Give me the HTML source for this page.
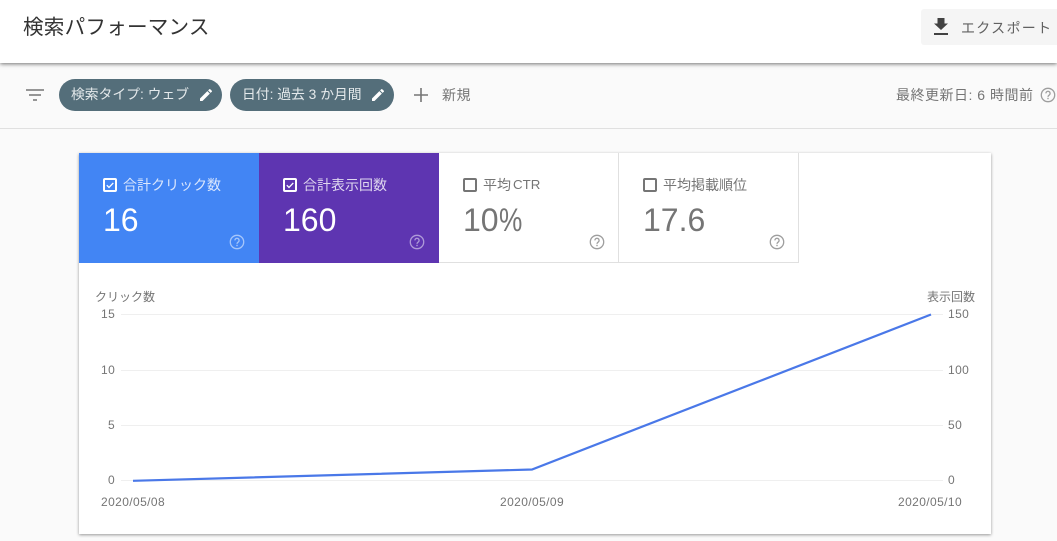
<!DOCTYPE html>
<html lang="ja">
<head>
<meta charset="utf-8">
<style>
html,body{margin:0;padding:0}
body{width:1057px;height:541px;overflow:hidden;position:relative;background:#fafafa;font-family:"Liberation Sans","Noto Sans CJK JP",sans-serif}
.a{position:absolute;white-space:nowrap}
.t13{font-size:14px;line-height:16px}
.ax{font-size:12px;line-height:14px;color:#757575;letter-spacing:.4px}
.ja{font-size:12px;line-height:14px;color:#757575}
.grid{position:absolute;height:1px;background:#efefef}
.tile{position:absolute;top:153px;width:180px;height:110px;box-sizing:border-box}
.num{position:absolute;left:24px;top:48px;font-size:32px;line-height:38px;white-space:nowrap}
.lab{position:absolute;left:44px;top:24px;font-size:14px;line-height:16px;white-space:nowrap}
.cb{position:absolute;left:24px;top:25px}
.hp{position:absolute;left:150px;top:81px}
</style>
</head>
<body>
<!-- header -->
<div class="a" style="left:0;top:0;width:1057px;height:63px;background:#fff;box-shadow:0 1px 4px rgba(0,0,0,.55)"></div>
<div class="a" style="left:23px;top:13px;font-size:20.6px;line-height:30px;color:#333;letter-spacing:.2px">検索パフォーマンス</div>
<div class="a" style="left:921px;top:9px;width:136px;height:36px;background:#f5f5f5;border-radius:3px 0 0 3px"></div>
<svg class="a" style="left:929px;top:15px" width="24" height="24" viewBox="0 0 24 24"><path fill="#424242" d="M19 8.500h-3.500V3h-7v5.500H5l7 6.500 7-6.500zM5 18v2h14v-2H5z"/></svg>
<div class="a t13" style="left:961px;top:20px;color:#616161;letter-spacing:1.300px">エクスポート</div>

<!-- filter bar -->
<div class="a" style="left:0;top:128px;width:1057px;height:1px;background:#e0e0e0"></div>
<svg class="a" style="left:23px;top:83px" width="24" height="24" viewBox="0 0 24 24"><path fill="#757575" d="M3 6.200h18v1.600H3zM6 11.200h12v1.600H6zM10 16.200h4v1.600h-4z"/></svg>

<div class="a" style="left:59px;top:79px;width:163px;height:32px;border-radius:16px;background:#546e7a"></div>
<div class="a t13" style="left:71px;top:87px;color:#e4e9eb;font-size:13.800px">検索タイプ: ウェブ</div>
<svg class="a" style="left:198px;top:87px" width="16" height="16" viewBox="0 0 24 24"><path fill="#fff" d="M3 17.250V21h3.750L17.810 9.940l-3.750-3.750L3 17.250zM20.710 7.040a1 1 0 0 0 0-1.410l-2.340-2.340a1 1 0 0 0-1.410 0l-1.830 1.830 3.750 3.750 1.830-1.830z"/></svg>

<div class="a" style="left:230px;top:79px;width:164px;height:32px;border-radius:16px;background:#546e7a"></div>
<div class="a t13" style="left:242px;top:87px;color:#e4e9eb;font-size:13.800px">日付: 過去 3 か月間</div>
<svg class="a" style="left:370px;top:87px" width="16" height="16" viewBox="0 0 24 24"><path fill="#fff" d="M3 17.250V21h3.750L17.810 9.940l-3.750-3.750L3 17.250zM20.710 7.040a1 1 0 0 0 0-1.410l-2.340-2.340a1 1 0 0 0-1.410 0l-1.830 1.830 3.750 3.750 1.830-1.830z"/></svg>

<svg class="a" style="left:409px;top:83px" width="24" height="24" viewBox="0 0 24 24"><path fill="#757575" d="M19 12.800h-6.200V19h-1.600v-6.200H5v-1.600h6.200V5h1.600v6.200H19v1.600z"/></svg>
<div class="a t13" style="left:442px;top:87px;color:#757575;letter-spacing:.5px">新規</div>

<div class="a t13" style="left:896px;top:87px;color:#757575;letter-spacing:.5px">最終更新日: 6 時間前</div>
<svg class="a" style="left:1040px;top:87px" width="16" height="16" viewBox="0 0 16 16"><circle cx="8" cy="8" r="6.700" fill="none" stroke="#9e9e9e" stroke-width="1.300"/><path d="M5.900 6.400a2.100 2.100 0 1 1 3.300 1.700c-.8.500-1.200.9-1.200 1.800" fill="none" stroke="#9e9e9e" stroke-width="1.300"/><rect x="7.300" y="10.800" width="1.400" height="1.400" fill="#9e9e9e"/></svg>

<!-- card -->
<div class="a" style="left:79px;top:153px;width:912px;height:381px;background:#fff;box-shadow:0 1px 3px rgba(0,0,0,.4)"></div>

<div class="tile" style="left:79px;background:#4285f4">
  <svg class="cb" width="14" height="14" viewBox="0 0 14 14"><rect x="1" y="1" width="12" height="12" rx="1" fill="none" stroke="#fff" stroke-width="2"/><path d="M3.800 7.200l2.200 2.200 4.300-4.500" fill="none" stroke="#fff" stroke-width="1.300"/></svg>
  <div class="lab" style="color:#dbe7fd">合計クリック数</div>
  <div class="num" style="color:#fff">16</div>
  <svg class="hp" width="16" height="16" viewBox="0 0 16 16"><circle cx="8" cy="8" r="6.700" fill="none" stroke="#a6c6fa" stroke-width="1.300"/><path d="M5.900 6.400a2.100 2.100 0 1 1 3.300 1.700c-.8.500-1.200.9-1.200 1.800" fill="none" stroke="#a6c6fa" stroke-width="1.300"/><rect x="7.300" y="10.800" width="1.400" height="1.400" fill="#a6c6fa"/></svg>
</div>

<div class="tile" style="left:259px;background:#5e35b1">
  <svg class="cb" width="14" height="14" viewBox="0 0 14 14"><rect x="1" y="1" width="12" height="12" rx="1" fill="none" stroke="#fff" stroke-width="2"/><path d="M3.800 7.200l2.200 2.200 4.300-4.500" fill="none" stroke="#fff" stroke-width="1.300"/></svg>
  <div class="lab" style="color:#dfd7ef">合計表示回数</div>
  <div class="num" style="color:#fff">160</div>
  <svg class="hp" width="16" height="16" viewBox="0 0 16 16"><circle cx="8" cy="8" r="6.700" fill="none" stroke="#ae9ad8" stroke-width="1.300"/><path d="M5.900 6.400a2.100 2.100 0 1 1 3.300 1.700c-.8.500-1.200.9-1.200 1.800" fill="none" stroke="#ae9ad8" stroke-width="1.300"/><rect x="7.300" y="10.800" width="1.400" height="1.400" fill="#ae9ad8"/></svg>
</div>

<div class="tile" style="left:439px;border-right:1px solid #e0e0e0;border-bottom:1px solid #e0e0e0">
  <svg class="cb" width="14" height="14" viewBox="0 0 14 14"><rect x="1" y="1" width="12" height="12" rx="1" fill="none" stroke="#757575" stroke-width="2"/></svg>
  <div class="lab" style="color:#757575">平均<span style="position:absolute;left:30px;top:0;font-size:13.300px">CTR</span></div>
  <div class="num" style="color:#757575">10<span style="display:inline-block;transform:scaleX(.82);transform-origin:left">%</span></div>
  <svg class="hp" width="16" height="16" viewBox="0 0 16 16"><circle cx="8" cy="8" r="6.700" fill="none" stroke="#9e9e9e" stroke-width="1.300"/><path d="M5.900 6.400a2.100 2.100 0 1 1 3.300 1.700c-.8.500-1.200.9-1.200 1.800" fill="none" stroke="#9e9e9e" stroke-width="1.300"/><rect x="7.300" y="10.800" width="1.400" height="1.400" fill="#9e9e9e"/></svg>
</div>

<div class="tile" style="left:619px;border-right:1px solid #e0e0e0;border-bottom:1px solid #e0e0e0">
  <svg class="cb" width="14" height="14" viewBox="0 0 14 14"><rect x="1" y="1" width="12" height="12" rx="1" fill="none" stroke="#757575" stroke-width="2"/></svg>
  <div class="lab" style="color:#757575">平均掲載順位</div>
  <div class="num" style="color:#757575">17.6</div>
  <svg class="hp" width="16" height="16" viewBox="0 0 16 16"><circle cx="8" cy="8" r="6.700" fill="none" stroke="#9e9e9e" stroke-width="1.300"/><path d="M5.900 6.400a2.100 2.100 0 1 1 3.300 1.700c-.8.500-1.200.9-1.200 1.800" fill="none" stroke="#9e9e9e" stroke-width="1.300"/><rect x="7.300" y="10.800" width="1.400" height="1.400" fill="#9e9e9e"/></svg>
</div>

<!-- chart -->
<div class="a ja" style="left:95px;top:290px">クリック数</div>
<div class="a ja" style="left:927px;top:290px">表示回数</div>

<div class="grid" style="left:121px;top:314px;width:822px"></div>
<div class="grid" style="left:121px;top:370px;width:822px"></div>
<div class="grid" style="left:121px;top:425px;width:822px"></div>
<div class="grid" style="left:121px;top:480px;width:822px"></div>

<div class="a ax" style="left:101px;top:307px">15</div>
<div class="a ax" style="left:101px;top:363px">10</div>
<div class="a ax" style="left:108px;top:418px">5</div>
<div class="a ax" style="left:108px;top:473px">0</div>

<div class="a ax" style="left:948px;top:307px">150</div>
<div class="a ax" style="left:948px;top:363px">100</div>
<div class="a ax" style="left:948px;top:418px">50</div>
<div class="a ax" style="left:948px;top:473px">0</div>

<svg class="a" style="left:0;top:0" width="1057" height="541" viewBox="0 0 1057 541"><path d="M133 480.800L532 469.500L931 314.500" fill="none" stroke="#4a78e8" stroke-width="2.200"/></svg>

<div class="a ax" style="left:101px;top:495px">2020/05/08</div>
<div class="a ax" style="left:500px;top:495px">2020/05/09</div>
<div class="a ax" style="left:898px;top:495px">2020/05/10</div>
</body>
</html>
